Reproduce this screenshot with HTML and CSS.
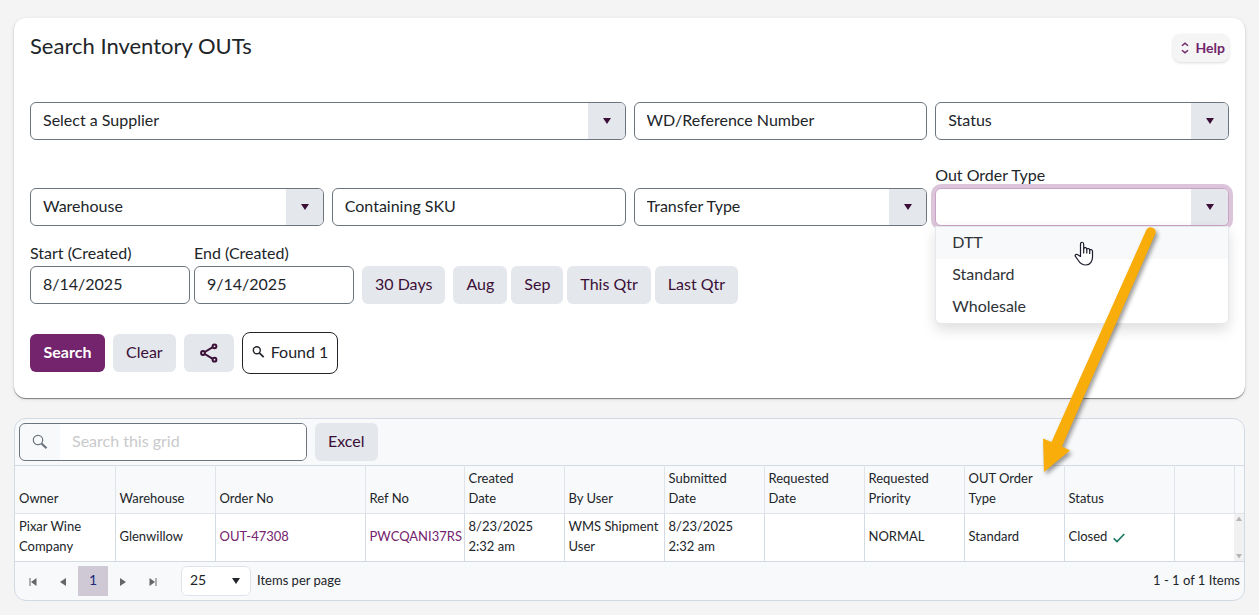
FILE: index.html
```html
<!DOCTYPE html>
<html lang="en">
<head>
    <meta charset="UTF-8">
    <meta name="viewport" content="width=device-width, initial-scale=1.0">
    <title>Search Inventory OUTs</title>
    <link rel="stylesheet" href="styles.css">
</head>
<body>
    <main class="page">
        <form class="card">
            <div class="card-header">
                <h1>Search Inventory OUTs</h1>
                <button type="button" class="help">
                    <svg width="8" height="12" viewBox="0 0 8 12" fill="none" stroke="currentColor" stroke-width="1.5"><path d="M1 3.800 4 1.200 7 3.800M1 8.200l3 2.600 3-2.600"/></svg>
                    Help
                </button>
            </div>

            <div class="filters">
                <div class="combo wide">
                    <select aria-label="Supplier"><option>Select a Supplier</option></select>
                </div>
                <input class="textbox" type="text" aria-label="WD/Reference Number" placeholder="WD/Reference Number">
                <div class="combo">
                    <select aria-label="Status"><option>Status</option></select>
                </div>
            </div>

            <div class="filters second">
                <div class="combo">
                    <select aria-label="Warehouse"><option>Warehouse</option></select>
                </div>
                <input class="textbox" type="text" aria-label="Containing SKU" placeholder="Containing SKU">
                <div class="combo">
                    <select aria-label="Transfer Type"><option>Transfer Type</option></select>
                </div>
                <div class="field open">
                    <label for="orderType">Out Order Type</label>
                    <div class="combo focused">
                        <select id="orderType"><option></option></select>
                    </div>
                    <ul class="options">
                        <li class="hover">DTT</li>
                        <li>Standard</li>
                        <li>Wholesale</li>
                    </ul>
                    <svg class="cursor" width="20" height="26" viewBox="0 0 20 26" fill="#fff" stroke="#1b1b2b" stroke-width="1.2" stroke-linejoin="round" stroke-linecap="round">
                        <path d="M6.500 15.500V3.200C6.500.600 9.700.600 9.700 3.200V7.500C10.500 6 12.800 6.500 12.800 8.200 13.700 7 15.700 7.500 15.700 9 17.200 8 18.500 9 18.500 10.500V16C18.500 19.500 16.500 24 12 24 7.500 24 5.500 21.500 4 19L1.300 15.200C.600 13.700 2.500 12.700 3.800 13.700Z"/>
                        <path d="M9.700 7.500v4.500M12.800 8.200V12M15.700 9v3.500" fill="none"/>
                    </svg>
                </div>
            </div>

            <div class="dates">
                <div class="field">
                    <label for="start">Start (Created)</label>
                    <input id="start" class="textbox date" type="text" value="8/14/2025">
                </div>
                <div class="field">
                    <label for="end">End (Created)</label>
                    <input id="end" class="textbox date" type="text" value="9/14/2025">
                </div>
                <button type="button" class="btn spaced">30 Days</button>
                <button type="button" class="btn spaced">Aug</button>
                <button type="button" class="btn">Sep</button>
                <button type="button" class="btn">This Qtr</button>
                <button type="button" class="btn">Last Qtr</button>
            </div>

            <div class="actions">
                <button type="button" class="btn primary">Search</button>
                <button type="button" class="btn">Clear</button>
                <button type="button" class="btn share" aria-label="Share">
                    <svg width="18" height="20" viewBox="0 0 18 20" fill="none" stroke="currentColor" stroke-width="2"><path d="M4.800 9 12.400 4.400M4.800 11l7.600 4.600"/><circle cx="3" cy="10" r="1.900"/><circle cx="14.500" cy="3.300" r="1.900"/><circle cx="14.500" cy="16.700" r="1.900"/></svg>
                </button>
                <button type="button" class="btn found">
                    <svg width="13" height="13" viewBox="0 0 13 13" fill="none" stroke="currentColor"><circle cx="4.800" cy="4.300" r="3.500" stroke-width="1.400"/><path d="M7.300 6.800 11.700 11.200" stroke-width="1.700"/></svg>
                    Found 1
                </button>
            </div>
        </form>

        <section class="grid">
            <div class="toolbar">
                <div class="grid-search">
                    <svg width="40" height="36" viewBox="0 0 40 36" fill="none" stroke="#6c757d"><circle cx="18" cy="16" r="4.700" stroke-width="1.200"/><path d="M21.500 19.500 26.500 24.200" stroke-width="2.200"/></svg>
                    <input type="text" aria-label="Search this grid" placeholder="Search this grid">
                </div>
                <button type="button" class="btn">Excel</button>
            </div>

            <table>
                <colgroup>
                    <col class="w100"><col class="w100"><col class="w150"><col class="w99"><col class="w100"><col class="w100"><col class="w100"><col class="w100"><col class="w100"><col class="w100"><col class="w110"><col><col class="w10">
                </colgroup>
                <thead>
                    <tr>
                        <th>Owner</th>
                        <th>Warehouse</th>
                        <th>Order No</th>
                        <th>Ref No</th>
                        <th>Created<br>Date</th>
                        <th>By User</th>
                        <th>Submitted<br>Date</th>
                        <th>Requested<br>Date</th>
                        <th>Requested<br>Priority</th>
                        <th>OUT Order<br>Type</th>
                        <th>Status</th>
                        <th></th>
                        <th></th>
                    </tr>
                </thead>
                <tbody>
                    <tr>
                        <td>Pixar Wine Company</td>
                        <td>Glenwillow</td>
                        <td><a href="#">OUT-47308</a></td>
                        <td><a href="#">PWCQANI37RS</a></td>
                        <td>8/23/2025<br>2:32 am</td>
                        <td>WMS Shipment User</td>
                        <td>8/23/2025<br>2:32 am</td>
                        <td></td>
                        <td>NORMAL</td>
                        <td>Standard</td>
                        <td>Closed
                            <svg class="check" width="12" height="10" viewBox="0 0 12 10" fill="none" stroke="#1b7a63" stroke-width="1.700"><path d="M.700 5.300 4 8.500 11.300 1"/></svg>
                        </td>
                        <td></td>
                        <td class="scroll">
                            <svg width="10" height="47" viewBox="0 0 10 47" fill="#b5b5b5"><path d="M2 7 5 2.500 8 7ZM2 40l3 4.500L8 40Z"/></svg>
                        </td>
                    </tr>
                </tbody>
            </table>

            <div class="pager">
                <button type="button" aria-label="First page"><svg width="8" height="8" viewBox="0 0 8 8"><path d="M.500 0h1v8h-1ZM7.500 0v8L2 4Z"/></svg></button>
                <button type="button" aria-label="Previous page"><svg width="8" height="8" viewBox="0 0 8 8"><path d="M7 0v8L1 4Z"/></svg></button>
                <button type="button" class="current">1</button>
                <button type="button" aria-label="Next page"><svg width="8" height="8" viewBox="0 0 8 8"><path d="M1 0v8l6-4Z"/></svg></button>
                <button type="button" aria-label="Last page"><svg width="8" height="8" viewBox="0 0 8 8"><path d="M6.500 0h1v8h-1ZM.500 0v8L6 4Z"/></svg></button>
                <div class="page-size">
                    <select id="pageSize"><option>25</option></select>
                </div>
                <label for="pageSize">Items per page</label>
                <span class="info">1 - 1 of 1 Items</span>
            </div>
        </section>

        <!-- callout from the drop-down to the OUT Order Type column -->
        <svg class="callout" width="130" height="260" viewBox="0 0 130 260" fill="#f9ad0b">
            <path d="M116.500 8.500A5 5 0 0 1 125.500 12.500L32 225.500 40 229.500 14 251 13 217.500 21.500 221Z"/>
        </svg>
    </main>
</body>
</html>
```
FILE: styles.css
```css
* {
    box-sizing: border-box;
}
body {
    margin: 0;
    background: #f4f4f4;
    color: #212529;
    font-family: Lato, "Liberation Sans", sans-serif;
    font-size: 16px;
    line-height: 24px;
}
button, input, select {
    font: inherit;
    color: inherit;
}
button {
    cursor: pointer;
}
.page {
    position: relative;
    padding: 18px 14px;
}

/* search card */
.card {
    padding: 16px 16px 24px;
    background: #fff;
    border-radius: 12px;
    box-shadow: 0 1px 1px rgba(0, 0, 0, 0.45), 0 1px 4px rgba(0, 0, 0, 0.1);
}
.card-header {
    display: flex;
    justify-content: space-between;
    align-items: flex-start;
    height: 68px;
}
h1 {
    margin: 0;
    font-size: 22px;
    font-weight: 400;
    line-height: 24px;
}
.help {
    display: flex;
    align-items: center;
    gap: 7px;
    height: 28px;
    padding: 0 4px 0 8px;
    border: 0;
    border-radius: 8px;
    background: #f5f5f5;
    color: #71246b;
    font-size: 14px;
    font-weight: 700;
    box-shadow: 0 1px 3px rgba(0, 0, 0, 0.15);
}
.filters {
    display: grid;
    grid-template-columns: repeat(4, 1fr);
    gap: 8px;
    align-items: end;
}
.filters.second {
    margin-top: 24px;
}
.wide {
    grid-column: span 2;
}
.textbox {
    width: 100%;
    height: 38px;
    padding: 0 12px 3px;
    border: 1px solid #6c757d;
    border-radius: 6px;
    background: #fff;
}
.textbox::placeholder {
    color: #212529;
    opacity: 1;
}
.combo {
    position: relative;
    height: 38px;
    border: 1px solid #6c757d;
    border-radius: 6px;
    background: #fff;
    overflow: hidden;
}
.combo select {
    width: 100%;
    height: 100%;
    padding: 0 48px 2px 12px;
    border: 0;
    background: linear-gradient(#e4e7eb, #e4e7eb) right / 37px 100% no-repeat;
    appearance: none;
    outline: none;
}
.combo::after {
    content: "";
    position: absolute;
    top: 15px;
    right: 14px;
    border: 4px solid transparent;
    border-top: 6px solid #3b0f38;
    border-bottom: 0;
    pointer-events: none;
}
.field label {
    display: block;
    line-height: 22px;
    padding-bottom: 2px;
}
.open {
    position: relative;
}
.focused {
    border-color: #c9a3c6;
    box-shadow: 0 0 0 4px #dcc5da;
}
.options {
    position: absolute;
    top: 100%;
    left: 0;
    right: 0;
    margin: 0;
    padding: 0;
    list-style: none;
    background: #fff;
    border: 1px solid #e4e7eb;
    border-radius: 0 0 6px 6px;
    box-shadow: 0 6px 14px rgba(0, 0, 0, 0.13);
}
.options li {
    padding: 3px 16px 5px;
    color: #2f3337;
}
.options .hover {
    background: #f8f9fb;
}
.cursor {
    position: absolute;
    left: 139px;
    top: 77px;
}
.dates {
    display: flex;
    align-items: flex-end;
    gap: 4px;
    margin-top: 16px;
}
.date {
    width: 160px;
}
.btn {
    height: 38px;
    padding: 0 13px 2px;
    border: 0;
    border-radius: 6px;
    background: #e4e7eb;
    color: #3b0f38;
}
.spaced {
    margin-left: 4px;
}
.actions {
    display: flex;
    align-items: center;
    gap: 8px;
    margin-top: 28px;
}
.primary {
    min-width: 75px;
    background: #74236d;
    color: #fff;
    font-weight: 700;
}
.share {
    display: flex;
    justify-content: center;
    align-items: center;
    width: 50px;
    padding-bottom: 0;
}
.found {
    display: flex;
    align-items: center;
    gap: 6px;
    height: 42px;
    padding: 0 9px 2px;
    border: 1px solid #212529;
    border-radius: 8px;
    background: #fff;
    color: #212529;
}

/* results grid */
.grid {
    margin-top: 20px;
    border: 1px solid #d3dae4;
    border-radius: 12px;
    background: #f8f9fb;
    font-size: 13px;
    line-height: 20px;
    overflow: hidden;
}
.toolbar {
    display: flex;
    gap: 8px;
    padding: 4px;
    font-size: 16px;
}
.grid-search {
    display: flex;
    width: 288px;
    height: 38px;
    border: 1px solid #6c757d;
    border-radius: 6px;
    overflow: hidden;
}
.grid-search input {
    flex: 1;
    min-width: 0;
    padding: 0 12px 2px;
    border: 0;
    background: #fff;
}
.grid-search input::placeholder {
    color: #c8cacc;
    opacity: 1;
}
table {
    width: 100%;
    table-layout: fixed;
    border-collapse: collapse;
    border-top: 1px solid #d3dae4;
    border-bottom: 1px solid #d3dae4;
}
th, td {
    height: 48px;
    padding: 2px 4px 5px;
    text-align: left;
    font-weight: 400;
    border-left: 1px solid #d3dae4;
}
th {
    vertical-align: bottom;
    border-color: #e0e4ea;
    border-bottom: 1px solid #e0e4ea;
}
td {
    background: #fff;
}
th:first-child, td:first-child {
    border-left: 0;
}
td a {
    color: #74236d;
    text-decoration: none;
}
.w99 {
    width: 99px;
}
.w100 {
    width: 100px;
}
.w110 {
    width: 110px;
}
.w150 {
    width: 150px;
}
.w10 {
    width: 10px;
}
.check {
    margin-left: 2px;
    vertical-align: -2px;
}
td.scroll {
    padding: 0;
    border: 0;
    background: #f1f1f1;
}
.scroll svg {
    display: block;
}
.pager {
    display: flex;
    align-items: center;
    height: 38px;
    padding: 0 4px 0 3px;
}
.pager button {
    width: 30px;
    height: 30px;
    padding: 0;
    border: 0;
    background: none;
    fill: #666;
}
.pager .current {
    padding-bottom: 2px;
    background: #cec9d4;
    color: #212a7a;
    font-size: 14px;
}
.pager label, .info {
    padding-bottom: 2px;
}
.page-size {
    position: relative;
    width: 70px;
    margin: 0 6px 0 13px;
}
.page-size select {
    width: 100%;
    height: 30px;
    padding: 0 8px 2px;
    border: 1px solid #e0e4ea;
    border-radius: 6px;
    background: #fff;
    font-size: 14px;
    appearance: none;
}
.page-size::after {
    content: "";
    position: absolute;
    top: 12px;
    right: 11px;
    border: 4px solid transparent;
    border-top: 6px solid #212529;
    border-bottom: 0;
    pointer-events: none;
}
.info {
    margin-left: auto;
}
.callout {
    position: absolute;
    top: 221px;
    right: 99px;
    pointer-events: none;
    filter: drop-shadow(2px 3px 2px rgba(0, 0, 0, 0.4));
}
```
